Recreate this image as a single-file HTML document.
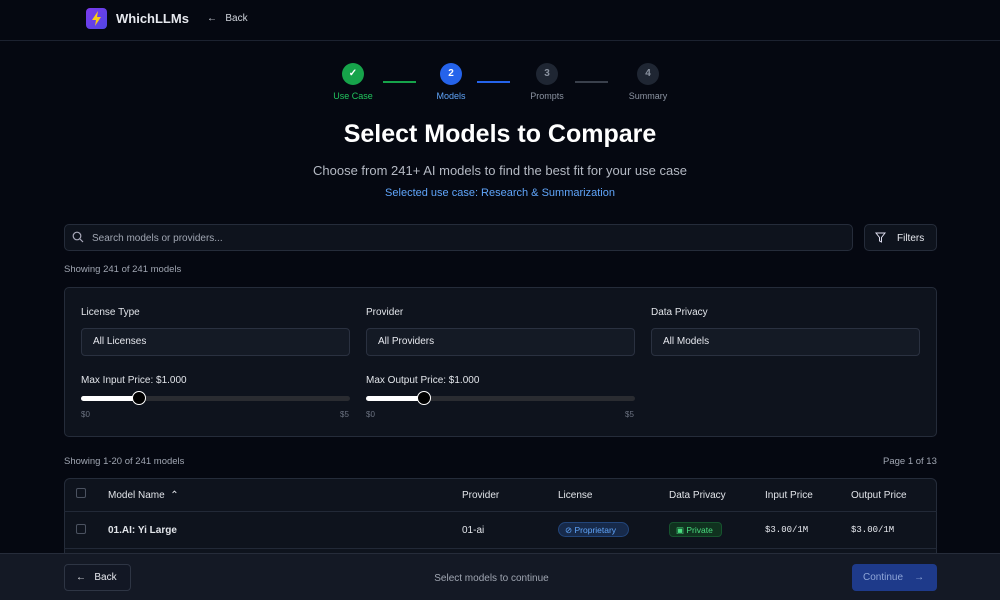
<!DOCTYPE html>
<html><head><style>
*{box-sizing:border-box;margin:0;padding:0}
html,body{width:1000px;height:600px;overflow:hidden}
body{background:#050811;font-family:"Liberation Sans",sans-serif;color:#e6e8ee;position:relative}
.abs{position:absolute}
.hdr{left:0;top:0;width:1000px;height:41px;border-bottom:1px solid #1c2230}
.logo{left:86px;top:8px;width:21px;height:21px;border-radius:4px;background:linear-gradient(135deg,#7c3aed,#4f46e5)}
.step{width:22px;height:22px;border-radius:50%;font-size:10px;text-align:center;line-height:22px;font-weight:bold}
.sl{font-size:9px;text-align:center;width:70px}
.line{height:2px;width:33px}
.box{background:#0e131d;border:1px solid #252c3a;border-radius:5px}
.lbl{font-size:10px;color:#e2e5ea}
.sel{height:28px;width:269px;font-size:10px;padding:0 11px;line-height:26px;border-radius:4px;background:#141a25;border:1px solid #2a3140}
.track{height:5px;width:269px;background:#2a2c31;border-radius:3px}
.small{font-size:8px;color:#6b7280}
</style></head><body>
<div class="abs hdr"></div>
<div class="abs logo"><svg width="21" height="21" viewBox="0 0 21 21"><path d="M12 3 L6 12 H10 L9 18 L15 9 H11 Z" fill="#facc15"/></svg></div>
<div class="abs" style="left:116px;top:11px;font-size:13px;font-weight:bold">WhichLLMs</div>
<div class="abs" style="left:207px;top:13px;font-size:10px;color:#d0d4dc">←&nbsp;&nbsp;&nbsp;Back</div>

<div class="abs step" style="left:342px;top:63px;background:#16a34a;color:#fff">✓</div>
<div class="abs sl" style="left:318px;top:91px;color:#22c55e">Use Case</div>
<div class="abs line" style="left:383px;top:81px;background:#16a34a"></div>
<div class="abs step" style="left:440px;top:63px;background:#2563eb;color:#fff">2</div>
<div class="abs sl" style="left:416px;top:91px;color:#60a5fa">Models</div>
<div class="abs line" style="left:477px;top:81px;background:#2563eb"></div>
<div class="abs step" style="left:536px;top:63px;background:#1f2633;color:#8b93a1">3</div>
<div class="abs sl" style="left:512px;top:91px;color:#8b93a1">Prompts</div>
<div class="abs line" style="left:575px;top:81px;background:#3a404c"></div>
<div class="abs step" style="left:637px;top:63px;background:#1f2633;color:#8b93a1">4</div>
<div class="abs sl" style="left:613px;top:91px;color:#8b93a1">Summary</div>

<div class="abs" style="left:0;width:1000px;top:120px;text-align:center;font-size:25px;font-weight:bold;color:#fff">Select Models to Compare</div>
<div class="abs" style="left:0;width:1000px;top:163px;text-align:center;font-size:13px;color:#b4b9c3">Choose from 241+ AI models to find the best fit for your use case</div>
<div class="abs" style="left:0;width:1000px;top:187px;text-align:center;font-size:11px;color:#60a5fa">Selected use case: Research &amp; Summarization</div>

<div class="abs box" style="left:64px;top:224px;width:789px;height:27px"></div>
<svg class="abs" style="left:72px;top:231px" width="12" height="12" viewBox="0 0 12 12"><circle cx="5" cy="5" r="3.8" fill="none" stroke="#aab" stroke-width="1.2"/><path d="M8 8 L11 11" stroke="#aab" stroke-width="1.2"/></svg>
<div class="abs" style="left:92px;top:233px;font-size:10px;color:#a0a6b2">Search models or providers...</div>
<div class="abs box" style="left:864px;top:224px;width:73px;height:27px"></div>
<svg class="abs" style="left:875px;top:232px" width="11" height="11" viewBox="0 0 11 11"><path d="M1 1 H10 L6.5 5.5 V10 L4.5 9 V5.5 Z" fill="none" stroke="#dde" stroke-width="1"/></svg>
<div class="abs" style="left:897px;top:233px;font-size:10px">Filters</div>
<div class="abs" style="left:64px;top:264px;font-size:9.5px;color:#a0a6b2">Showing 241 of 241 models</div>

<div class="abs box" style="left:64px;top:287px;width:873px;height:150px"></div>
<div class="abs lbl" style="left:81px;top:307px">License Type</div>
<div class="abs lbl" style="left:366px;top:307px">Provider</div>
<div class="abs lbl" style="left:651px;top:307px">Data Privacy</div>
<div class="abs sel" style="left:81px;top:328px">All Licenses</div>
<div class="abs sel" style="left:366px;top:328px">All Providers</div>
<div class="abs sel" style="left:651px;top:328px">All Models</div>
<div class="abs lbl" style="left:81px;top:375px">Max Input Price: $1.000</div>
<div class="abs lbl" style="left:366px;top:375px">Max Output Price: $1.000</div>
<div class="abs track" style="left:81px;top:396px"><div style="width:58px;height:5px;background:#fff;border-radius:3px"></div></div>
<div class="abs track" style="left:366px;top:396px"><div style="width:58px;height:5px;background:#fff;border-radius:3px"></div></div>
<div class="abs" style="left:132px;top:391px;width:14px;height:14px;border-radius:50%;background:#000;border:1.5px solid #fff"></div>
<div class="abs" style="left:417px;top:391px;width:14px;height:14px;border-radius:50%;background:#000;border:1.5px solid #fff"></div>
<div class="abs small" style="left:81px;top:410px">$0</div>
<div class="abs small" style="left:340px;top:410px">$5</div>
<div class="abs small" style="left:366px;top:410px">$0</div>
<div class="abs small" style="left:625px;top:410px">$5</div>

<div class="abs" style="left:64px;top:456px;font-size:9.5px;color:#a0a6b2">Showing 1-20 of 241 models</div>
<div class="abs" style="left:883px;top:456px;font-size:9.5px;color:#a0a6b2">Page 1 of 13</div>

<div class="abs box" style="left:64px;top:478px;width:873px;height:118px;border-radius:6px"></div>
<div class="abs" style="left:64px;top:511px;width:873px;height:1px;background:#222937"></div>
<div class="abs" style="left:64px;top:548px;width:873px;height:1px;background:#222937"></div>
<div class="abs" style="left:76px;top:488px;width:10px;height:10px;border:1px solid #4b5260;border-radius:2px"></div>
<div class="abs" style="left:76px;top:524px;width:10px;height:10px;border:1px solid #4b5260;border-radius:2px"></div>
<div class="abs lbl" style="left:108px;top:490px">Model Name &nbsp;⌃</div>
<div class="abs lbl" style="left:462px;top:490px">Provider</div>
<div class="abs lbl" style="left:558px;top:490px">License</div>
<div class="abs lbl" style="left:669px;top:490px">Data Privacy</div>
<div class="abs lbl" style="left:765px;top:490px">Input Price</div>
<div class="abs lbl" style="left:851px;top:490px">Output Price</div>
<div class="abs lbl" style="left:108px;top:525px;font-weight:bold">01.AI: Yi Large</div>
<div class="abs lbl" style="left:462px;top:525px">01-ai</div>
<div class="abs" style="left:558px;top:522px;width:71px;height:15px;border-radius:8px;background:#172a4a;border:1px solid #22457a;color:#60a5fa;font-size:8.5px;padding:2px 6px">⊘ Proprietary</div>
<div class="abs" style="left:669px;top:522px;width:53px;height:15px;border-radius:4px;background:#10321f;border:1px solid #16532e;color:#4ade80;font-size:8.5px;padding:2px 6px">▣ Private</div>
<div class="abs" style="left:765px;top:525px;font-size:9px;font-family:'Liberation Mono',monospace">$3.00/1M</div>
<div class="abs" style="left:851px;top:525px;font-size:9px;font-family:'Liberation Mono',monospace">$3.00/1M</div>

<div class="abs" style="left:0;top:553px;width:1000px;height:47px;background:#141925;border-top:1px solid #262c3a"></div>
<div class="abs" style="left:64px;top:564px;width:67px;height:27px;border:1px solid #2e3544;border-radius:4px;background:#121724;font-size:10px;padding:0 11px;line-height:25px">←&nbsp;&nbsp;&nbsp;Back</div>
<div class="abs" style="left:0;width:983px;top:573px;text-align:center;font-size:10px;color:#a0a6b2">Select models to continue</div>
<div class="abs" style="left:852px;top:564px;width:85px;height:27px;border-radius:4px;background:#1e3a8a;color:#8fa6d8;font-size:10px;padding:0 11px;line-height:27px">Continue&nbsp;&nbsp;&nbsp;&nbsp;→</div>
</body></html>
